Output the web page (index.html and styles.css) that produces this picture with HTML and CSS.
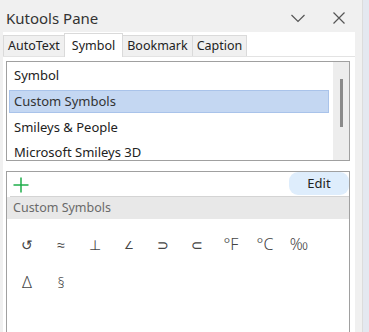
FILE: index.html
```html
<!DOCTYPE html>
<html lang="en">
<head>
    <meta charset="UTF-8">
    <title>Kutools Pane</title>
    <link rel="stylesheet" href="styles.css">
</head>
<body>
<div class="window">
    <div class="pane">

        <!-- Title bar -->
        <div class="titlebar">
            <span class="title">Kutools Pane</span>
            <div class="title-icons">
                <svg class="icon-chevron" width="16" height="10" viewBox="0 0 16 10">
                    <path d="M1.5 2 L8 8.5 L14.5 2" fill="none" stroke="#555" stroke-width="1.2"/>
                </svg>
                <svg class="icon-close" width="14" height="14" viewBox="0 0 14 14">
                    <path d="M1.5 1.5 L12.5 12.5 M12.5 1.5 L1.5 12.5" fill="none" stroke="#555" stroke-width="1.2"/>
                </svg>
            </div>
        </div>

        <!-- Tab control -->
        <div class="tabctl">
            <div class="tabs">
                <div class="tab">AutoText</div>
                <div class="tab active">Symbol</div>
                <div class="tab">Bookmark</div>
                <div class="tab">Caption</div>
            </div>
            <div class="tabpage">

                <div class="listbox">
                    <ul class="items">
                        <li>Symbol</li>
                        <li class="selected">Custom Symbols</li>
                        <li>Smileys &amp; People</li>
                        <li>Microsoft Smileys 3D</li>
                    </ul>
                    <div class="scrollbar"><div class="thumb"></div></div>
                </div>

                <div class="symbox">
                    <div class="toolbar">
                        <svg class="icon-plus" width="16" height="16" viewBox="0 0 16 16">
                            <path d="M8 0.5 V15.5 M0.5 8 H15.5" fill="none" stroke="#1fae4b" stroke-width="1.5"/>
                        </svg>
                        <div class="edit-btn">Edit</div>
                    </div>
                    <div class="group-head">Custom Symbols</div>
                    <div class="sym-grid">
                        <span class="sym small">&#x21BA;</span>
                        <span class="sym small">&#x2248;</span>
                        <span class="sym small">&#x22A5;</span>
                        <span class="sym tiny">&#x2220;</span>
                        <span class="sym small">&#x2283;</span>
                        <span class="sym small">&#x2282;</span>
                        <span class="sym">&deg;F</span>
                        <span class="sym">&deg;C</span>
                        <span class="sym">&#x2030;</span>
                        <span class="sym">&Delta;</span>
                        <span class="sym small">&sect;</span>
                    </div>
                </div>

            </div>
        </div>
    </div>
    <div class="outside"></div>
</div>
</body>
</html>
```

FILE: styles.css
```css
body {
    margin: 0;
    padding: 0;
    font-family: "Noto Sans", "DejaVu Sans", sans-serif;
    color: #222;
    background-color: #f0f0f0;
}
.window {
    display: flex;
    width: 369px;
    height: 332px;
    overflow: hidden;
}
.pane {
    width: 362px;
    border-right: 1px solid #dcdcdc;
    background-color: #f0f0f0;
    display: flex;
    flex-direction: column;
}
.outside {
    flex: 1;
    background-color: #e4e8f0;
}

/* Title bar */
.titlebar {
    height: 32px;
    display: flex;
    align-items: center;
    justify-content: space-between;
    padding: 0 0 0 6px;
}
.title {
    font-size: 15px;
    color: #333;
    margin-top: 4px;
}
.title-icons {
    display: flex;
    align-items: center;
    margin-top: 4px;
}
.icon-chevron {
    margin-right: 26px;
}
.icon-close {
    margin-right: 16px;
}

/* Tabs */
.tabctl {
    margin-left: 3px;
    width: 352px;
    flex: 1;
    display: flex;
    flex-direction: column;
    background-color: #fff;
}
.tabs {
    height: 24px;
    display: flex;
    align-items: flex-end;
    border-bottom: 1px solid #e3e3e3;
}
.tab {
    height: 20px;
    line-height: 20px;
    padding: 0 4px;
    font-size: 12.5px;
    color: #222;
    background-color: #f0f0f0;
    border: 1px solid #dadada;
    border-bottom: none;
    margin-right: -1px;
}
.tab.active {
    height: 23px;
    line-height: 24px;
    padding: 0 7px;
    background-color: #fff;
    position: relative;
    top: 1px;
}

/* Tab page */
.tabpage {
    padding: 4px 5px 0 3px;
    flex: 1;
    display: flex;
    flex-direction: column;
}
.listbox {
    height: 98px;
    border: 1px solid #a0a0a0;
    display: flex;
}
.items {
    list-style: none;
    margin: 0;
    padding: 1px 2px 0 2px;
    flex: 1;
}
.items li {
    height: 25px;
    line-height: 25px;
    padding-left: 5px;
    font-size: 13px;
    white-space: nowrap;
}
.items li.selected {
    height: 21px;
    line-height: 21px;
    margin: 2px 0;
    padding-left: 4px;
    background-color: #c4d7f2;
    border: 1px solid #a9c3ea;
    color: #333;
}
.scrollbar {
    width: 16px;
    margin-left: 2px;
    background-color: #ededed;
    display: flex;
    justify-content: center;
    padding-top: 17px;
}
.thumb {
    width: 3px;
    height: 48px;
    background-color: #8a8a8a;
}

/* Custom symbols box */
.symbox {
    margin-top: 10px;
    flex: 1;
    border: 1px solid #a0a0a0;
    border-bottom: none;
    display: flex;
    flex-direction: column;
}
.toolbar {
    height: 24px;
    display: flex;
    align-items: center;
    justify-content: space-between;
    margin-left: 3px;
    border-bottom: 1px solid #d4d4d4;
}
.icon-plus {
    margin-left: 3px;
    margin-top: 1px;
}
.edit-btn {
    width: 60px;
    height: 23px;
    line-height: 23px;
    align-self: flex-start;
    text-align: center;
    font-size: 13px;
    color: #222;
    background-color: #deedfc;
    border-radius: 9px;
}
.group-head {
    height: 22px;
    line-height: 22px;
    padding-left: 6px;
    font-size: 12.5px;
    color: #6a6a6a;
    background-color: #e8e8e8;
}
.sym-grid {
    display: grid;
    grid-template-columns: repeat(9, 34px);
    grid-auto-rows: 38px;
    padding: 6px 0 0 3px;
}
.sym {
    display: flex;
    align-items: center;
    justify-content: center;
    font-size: 16px;
    font-weight: 300;
    color: #444;
}
.sym.small {
    font-size: 14px;
}
.sym.tiny {
    font-size: 11px;
}
```
